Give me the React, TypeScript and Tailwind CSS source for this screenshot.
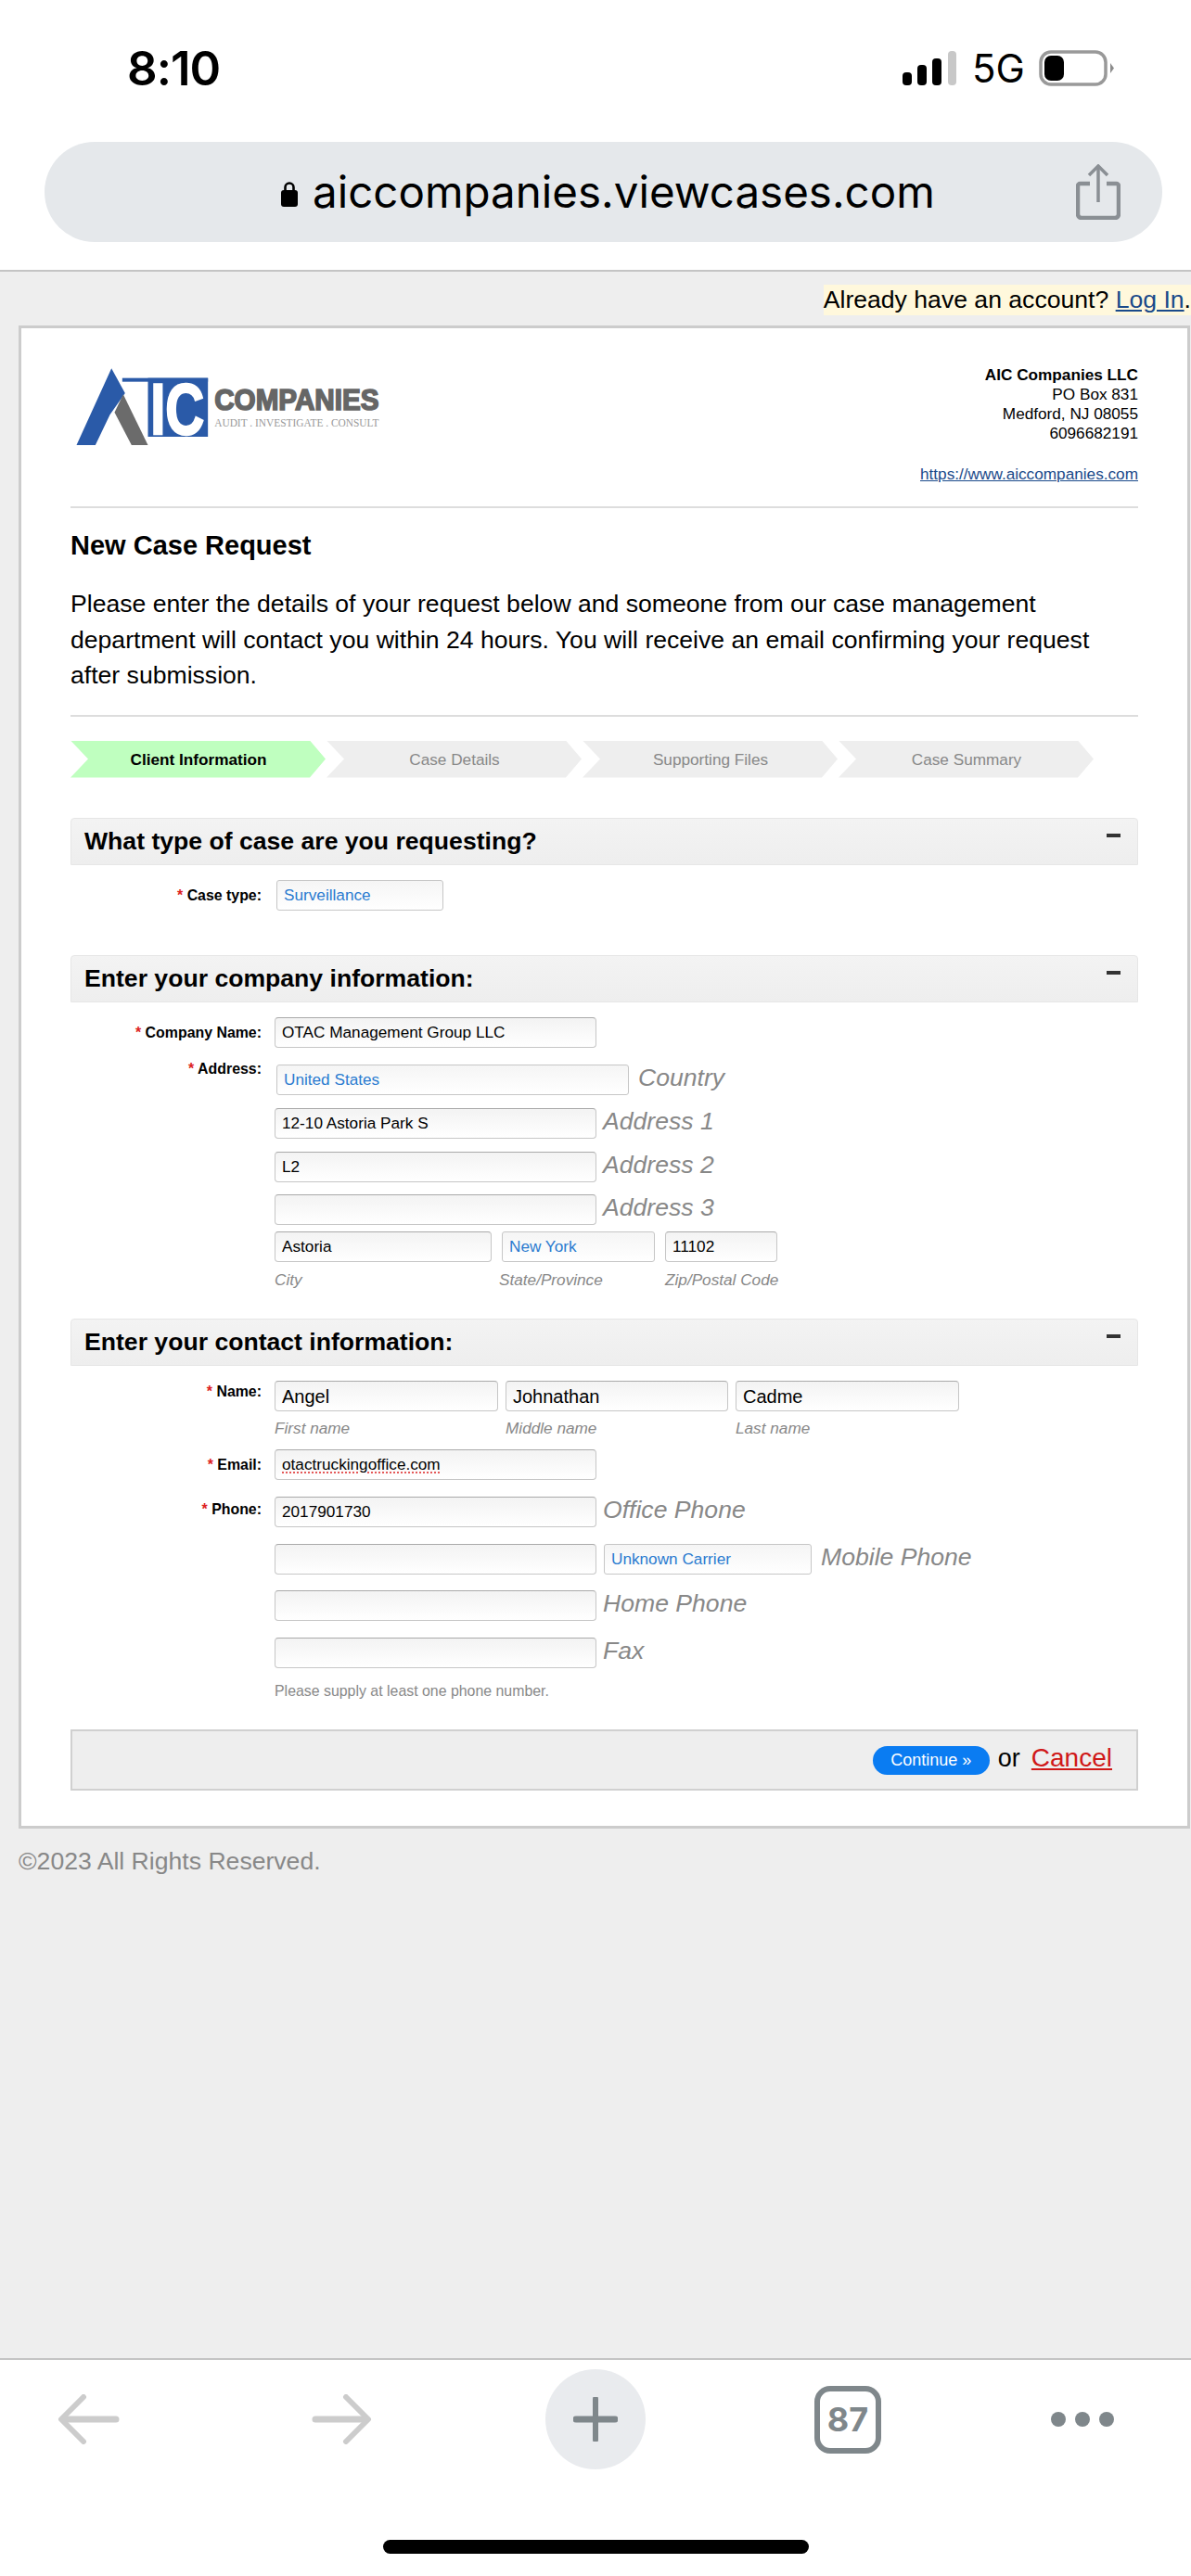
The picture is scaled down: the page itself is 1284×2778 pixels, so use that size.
import type { ReactNode } from "react";

const STEPS = [
  { name: "Client Information", cls: "bg-[#bfffbf] text-black font-bold" },
  { name: "Case Details", cls: "bg-[#eeeeee] text-[#888888]" },
  { name: "Supporting Files", cls: "bg-[#eeeeee] text-[#888888]" },
  { name: "Case Summary", cls: "bg-[#eeeeee] text-[#888888]" },
];

function Logo() {
  return (
    <svg viewBox="60 60 1160 300" className="w-[387px] h-[100px] shrink-0">
      <rect x="215" y="113" width="277" height="12" fill="#2a5aa8" />
      <rect x="298" y="113" width="194" height="190" fill="#2a5aa8" />
      <text
        x="306"
        y="294"
        fill="#ffffff"
        stroke="#ffffff"
        strokeWidth="7"
        fontFamily="Liberation Sans"
        fontWeight="700"
        fontSize="232"
        textLength="174"
        lengthAdjust="spacingAndGlyphs"
      >
        IC
      </text>
      <polygon points="180,82 224,162 175,232 128,330 67,330" fill="#2a5aa8" />
      <polygon points="218,166 298,330 245,330 190,224" fill="#6b6b6b" />
      <text
        x="513"
        y="216"
        fill="#666666"
        stroke="#666666"
        strokeWidth="5"
        fontFamily="Liberation Sans"
        fontWeight="700"
        fontSize="95"
        textLength="532"
        lengthAdjust="spacingAndGlyphs"
      >
        COMPANIES
      </text>
      <text
        x="513"
        y="270"
        fill="#999999"
        fontFamily="Liberation Serif"
        fontSize="35"
        textLength="532"
        lengthAdjust="spacingAndGlyphs"
      >
        AUDIT . INVESTIGATE . CONSULT
      </text>
    </svg>
  );
}

function SectionHeader({ title, className }: { title: string; className: string }) {
  return (
    <div
      className={`h-[51px] flex items-center justify-between pl-[14px] pr-[18px] rounded-t-[4px] border border-[#e6e6e6] bg-linear-to-b from-[#f3f3f3] to-[#eeeeee] ${className}`}
    >
      <span className="text-[26.600px] font-bold text-black pt-[2px]">{title}</span>
      <span className="w-[15px] h-[4px] bg-[#333333] mb-[12px]" />
    </div>
  );
}

function Row({
  label,
  labelClass,
  className,
  children,
}: {
  label?: string;
  labelClass?: string;
  className?: string;
  children: ReactNode;
}) {
  return (
    <div className={`flex ${className ?? ""}`}>
      <div className={`w-[206px] mr-[14px] shrink-0 text-right text-[15.900px] leading-[21px] font-bold text-black ${labelClass ?? ""}`}>
        {label && (
          <>
            <span className="text-[#dd2222]">* </span>
            {label}
          </>
        )}
      </div>
      {children}
    </div>
  );
}

function Field({ className, big, children }: { className: string; big?: boolean; children?: ReactNode }) {
  return (
    <div
      className={`h-[33px] shrink-0 flex items-center pl-[7px] pt-[2px] rounded-[4px] border border-[#c6c6c6] border-t-[#aaaaaa] bg-linear-to-b from-[#f3f3f3] to-white text-black ${big ? "text-[20px]" : "text-[17.200px]"} ${className}`}
    >
      {children}
    </div>
  );
}

function Select({ className, children }: { className: string; children: ReactNode }) {
  return (
    <div
      className={`h-[33px] shrink-0 flex items-center pl-[7px] pt-[2px] border border-[#c6c6c6] rounded-[3px] bg-linear-to-b from-[#f5f5f5] to-white text-[17.200px] text-[#2a7bd0] ${className}`}
    >
      {children}
    </div>
  );
}

function Hint({ children }: { children: ReactNode }) {
  return <span className="text-[26.600px] italic text-[#888888] leading-[29px]">{children}</span>;
}

function SubLabel({ className, children }: { className: string; children: ReactNode }) {
  return <span className={`text-[17.200px] italic text-[#888888] leading-[20px] shrink-0 ${className}`}>{children}</span>;
}

export default function App() {
  return (
    <div className="w-[1284px] h-[2778px] flex flex-col bg-white font-['Liberation_Sans',sans-serif] overflow-hidden">
      {/* Phone status + url bar */}
      <header className="h-[291px] shrink-0 flex flex-col">
        <div className="h-[54px] shrink-0" />
        <div className="h-[39px] shrink-0 flex items-center pl-[137px] font-['Inter',sans-serif]">
          <span className="w-[102px] text-[51px] leading-none font-semibold tracking-[-1px] text-black">8:10</span>
          <svg viewBox="0 0 58 37" className="w-[58px] h-[37px] ml-[734px] shrink-0">
            <rect x="0" y="23" width="10" height="14" rx="4" fill="#000" />
            <rect x="16" y="15" width="10" height="22" rx="4" fill="#000" />
            <rect x="32" y="8" width="10" height="29" rx="4" fill="#000" />
            <rect x="49" y="0" width="9" height="37" rx="4" fill="#c8c8c8" />
          </svg>
          <span className="w-[54px] ml-[17px] text-[42px] leading-none text-black shrink-0">5G</span>
          <svg viewBox="0 0 82 39" className="w-[82px] h-[39px] ml-[18px] shrink-0">
            <rect x="2" y="2" width="70" height="35" rx="11" fill="none" stroke="#999999" strokeWidth="3.500" />
            <rect x="6" y="6" width="21" height="27" rx="7" fill="#000" />
            <path d="M77 14 L81 19.500 L77 25 Z" fill="#8c8c8c" />
          </svg>
        </div>
        <div className="h-[108px] mt-[60px] mx-[48px] w-[1205px] shrink-0 rounded-[54px] bg-[#e5e8eb] flex items-center pl-[255px] pr-[45px] font-['Inter',sans-serif]">
          <svg viewBox="0 0 18 29" className="w-[18px] h-[29px] shrink-0 mt-[2px]">
            <path d="M4.500 13 V8 a4.500 4.500 0 0 1 9 0 V13" fill="none" stroke="#000" strokeWidth="2.600" />
            <rect x="0" y="11" width="18" height="18" rx="3" fill="#000" />
          </svg>
          <span className="ml-[16px] w-[669px] text-[47.500px] leading-none text-black whitespace-nowrap">aiccompanies.viewcases.com</span>
          <svg viewBox="0 0 48 60" className="w-[48px] h-[60px] ml-auto shrink-0">
            <path d="M15 21 H4.500 a2.500 2.500 0 0 0 -2.500 2.500 V54 a4 4 0 0 0 4 4 H42 a4 4 0 0 0 4 -4 V23.500 a2.500 2.500 0 0 0 -2.500 -2.500 H33" fill="none" stroke="#8a8f94" strokeWidth="4.500" />
            <path d="M24 4 V41" stroke="#8a8f94" strokeWidth="3.500" />
            <path d="M14 12 L24 2 L34 12" fill="none" stroke="#8a8f94" strokeWidth="3.500" />
          </svg>
        </div>
      </header>

      {/* Page */}
      <main className="flex-1 bg-[#eeeeee] border-t-2 border-[#c4c4c4] flex flex-col">
        <div className="h-[14px] shrink-0" />
        <div className="flex justify-end h-[33px] shrink-0">
          <div className="bg-[#fff8dc] text-[26.600px] leading-[33px] text-black whitespace-nowrap">
            Already have an account? <span className="text-[#1a4a8a] underline">Log In</span>.
          </div>
        </div>
        <div className="h-[11px] shrink-0" />

        <div className="ml-[20px] w-[1263px] h-[1621px] shrink-0 border-[3px] border-[#cccccc] bg-white pl-[53px] pr-[53px] pt-[34px] flex flex-col">
          <div className="flex justify-between">
            <div className="ml-[4px] mt-[2px]">
              <Logo />
            </div>
            <div className="mt-[6px] text-right text-[17.200px] leading-[21px] text-black">
              <p className="font-bold">AIC Companies LLC</p>
              <p>PO Box 831</p>
              <p>Medford, NJ 08055</p>
              <p>6096682191</p>
              <p className="mt-[23px] text-[#1a4a8a] underline">https://www.aiccompanies.com</p>
            </div>
          </div>
          <div className="h-[2px] mt-[24px] bg-[#dddddd] shrink-0" />
          <h1 className="mt-[22px] text-[29px] leading-[36px] font-bold text-black">New Case Request</h1>
          <p className="mt-[26px] text-[26.600px] leading-[38.500px] text-black">
            Please enter the details of your request below and someone from our case management department will contact you within 24 hours. You will receive an email confirming your request after submission.
          </p>
          <div className="h-[2px] mt-[23px] bg-[#dddddd] shrink-0" />

          <div className="flex mt-[26px]">
            {STEPS.map((s) => (
              <div
                key={s.name}
                className={`w-[276px] h-[40px] shrink-0 flex items-center justify-center pt-[2px] text-[17.200px] [clip-path:polygon(0_0,258px_0,275px_50%,258px_100%,0_100%,19px_50%)] ${s.cls}`}
              >
                {s.name}
              </div>
            ))}
          </div>

          <SectionHeader title="What type of case are you requesting?" className="mt-[43px]" />
          <Row label="Case type:" labelClass="pt-[6px]" className="mt-[16px]">
            <Select className="w-[180px] ml-[2px]">Surveillance</Select>
          </Row>

          <SectionHeader title="Enter your company information:" className="mt-[48px]" />
          <Row label="Company Name:" labelClass="pt-[6px]" className="mt-[16px]">
            <Field className="w-[347px]">OTAC Management Group LLC</Field>
          </Row>
          <Row label="Address:" labelClass="-mt-[6px]" className="mt-[18px]">
            <Select className="w-[380px] ml-[2px]">United States</Select>
            <span className="ml-[10px]"><Hint>Country</Hint></span>
          </Row>
          <Row className="mt-[14px]">
            <Field className="w-[347px]">12-10 Astoria Park S</Field>
            <span className="ml-[7px]"><Hint>Address 1</Hint></span>
          </Row>
          <Row className="mt-[14px]">
            <Field className="w-[347px]">L2</Field>
            <span className="ml-[7px]"><Hint>Address 2</Hint></span>
          </Row>
          <Row className="mt-[13px]">
            <Field className="w-[347px]" />
            <span className="ml-[7px]"><Hint>Address 3</Hint></span>
          </Row>
          <Row className="mt-[7px]">
            <Field className="w-[234px]">Astoria</Field>
            <Select className="w-[165px] ml-[11px]">New York</Select>
            <Field className="w-[121px] ml-[11px]">11102</Field>
          </Row>
          <Row className="mt-[9px]">
            <SubLabel className="w-[242px]">City</SubLabel>
            <SubLabel className="w-[179px]">State/Province</SubLabel>
            <SubLabel className="w-[160px]">Zip/Postal Code</SubLabel>
          </Row>

          <SectionHeader title="Enter your contact information:" className="mt-[32px]" />
          <Row label="Name:" labelClass="pt-[1px]" className="mt-[16px]">
            <Field big className="w-[241px]">Angel</Field>
            <Field big className="w-[240px] ml-[8px]">Johnathan</Field>
            <Field big className="w-[241px] ml-[8px]">Cadme</Field>
          </Row>
          <Row className="mt-[8px]">
            <SubLabel className="w-[249px]">First name</SubLabel>
            <SubLabel className="w-[248px]">Middle name</SubLabel>
            <SubLabel className="w-[200px]">Last name</SubLabel>
          </Row>
          <Row label="Email:" labelClass="pt-[6px]" className="mt-[13px]">
            <Field className="w-[347px]">
              <span className="underline decoration-dotted decoration-[#dd2222] underline-offset-[3px]">otactruckingoffice.com</span>
            </Field>
          </Row>
          <Row label="Phone:" labelClass="pt-[3px]" className="mt-[18px]">
            <Field className="w-[347px]">2017901730</Field>
            <span className="ml-[7px]"><Hint>Office Phone</Hint></span>
          </Row>
          <Row className="mt-[18px]">
            <Field className="w-[347px]" />
            <Select className="w-[224px] ml-[8px]">Unknown Carrier</Select>
            <span className="ml-[10px]"><Hint>Mobile Phone</Hint></span>
          </Row>
          <Row className="mt-[17px]">
            <Field className="w-[347px]" />
            <span className="ml-[7px]"><Hint>Home Phone</Hint></span>
          </Row>
          <Row className="mt-[18px]">
            <Field className="w-[347px]" />
            <span className="ml-[7px]"><Hint>Fax</Hint></span>
          </Row>
          <Row className="mt-[15px]">
            <span className="text-[15.900px] leading-[20px] text-[#888888]">Please supply at least one phone number.</span>
          </Row>

          <div className="h-[66px] mt-[31px] shrink-0 border-2 border-[#d0d0d0] bg-[#eeeeee] flex items-start justify-end pr-[26px] pt-[12px]">
            <div className="w-[126px] h-[31px] mt-[4px] rounded-[16px] bg-[#0a7cf2] text-white text-[18px] flex items-center justify-center">Continue »</div>
            <span className="ml-[9px] text-[27px] leading-[34px] text-black">or</span>
            <span className="ml-[12px] text-[28px] leading-[34px] text-[#d01818] underline">Cancel</span>
          </div>
        </div>

        <p className="ml-[20px] mt-[19px] text-[26.600px] leading-[32px] text-[#888888]">©2023 All Rights Reserved.</p>
      </main>

      {/* Browser toolbar */}
      <footer className="h-[235px] shrink-0 border-t-2 border-[#c4c4c4] bg-white flex flex-col">
        <div className="flex items-center h-[108px] mt-[10px] shrink-0">
          <svg viewBox="0 0 67 54" className="w-[67px] h-[54px] ml-[62px] shrink-0">
            <path d="M28 3 L4 27 L28 51" fill="none" stroke="#cccccc" strokeWidth="6" strokeLinecap="round" strokeLinejoin="round" />
            <path d="M6 27 H63" stroke="#cccccc" strokeWidth="7" strokeLinecap="round" />
          </svg>
          <svg viewBox="0 0 65 54" className="w-[65px] h-[54px] ml-[207px] shrink-0">
            <path d="M37 3 L61 27 L37 51" fill="none" stroke="#cccccc" strokeWidth="6" strokeLinecap="round" strokeLinejoin="round" />
            <path d="M4 27 H59" stroke="#cccccc" strokeWidth="7" strokeLinecap="round" />
          </svg>
          <div className="w-[108px] h-[108px] ml-[187px] shrink-0 rounded-full bg-[#e9ebee] flex items-center justify-center">
            <svg viewBox="0 0 48 48" className="w-[48px] h-[48px]">
              <path d="M24 2 V46" stroke="#7f878b" strokeWidth="6" strokeLinecap="round" />
              <path d="M3 24 H45" stroke="#7f878b" strokeWidth="7" strokeLinecap="round" />
            </svg>
          </div>
          <div className="w-[72px] h-[73px] ml-[182px] shrink-0 rounded-[17px] border-[6px] border-[#7f878b] flex items-center justify-center text-[36px] font-bold text-[#7f878b] font-['Inter',sans-serif]">
            87
          </div>
          <div className="flex gap-[10px] ml-[183px] shrink-0">
            <span className="w-[16px] h-[16px] rounded-full bg-[#7f878b]" />
            <span className="w-[16px] h-[16px] rounded-full bg-[#7f878b]" />
            <span className="w-[16px] h-[16px] rounded-full bg-[#7f878b]" />
          </div>
        </div>
        <div className="w-[459px] h-[15px] mt-[76px] ml-[413px] rounded-full bg-black shrink-0" />
      </footer>
    </div>
  );
}
